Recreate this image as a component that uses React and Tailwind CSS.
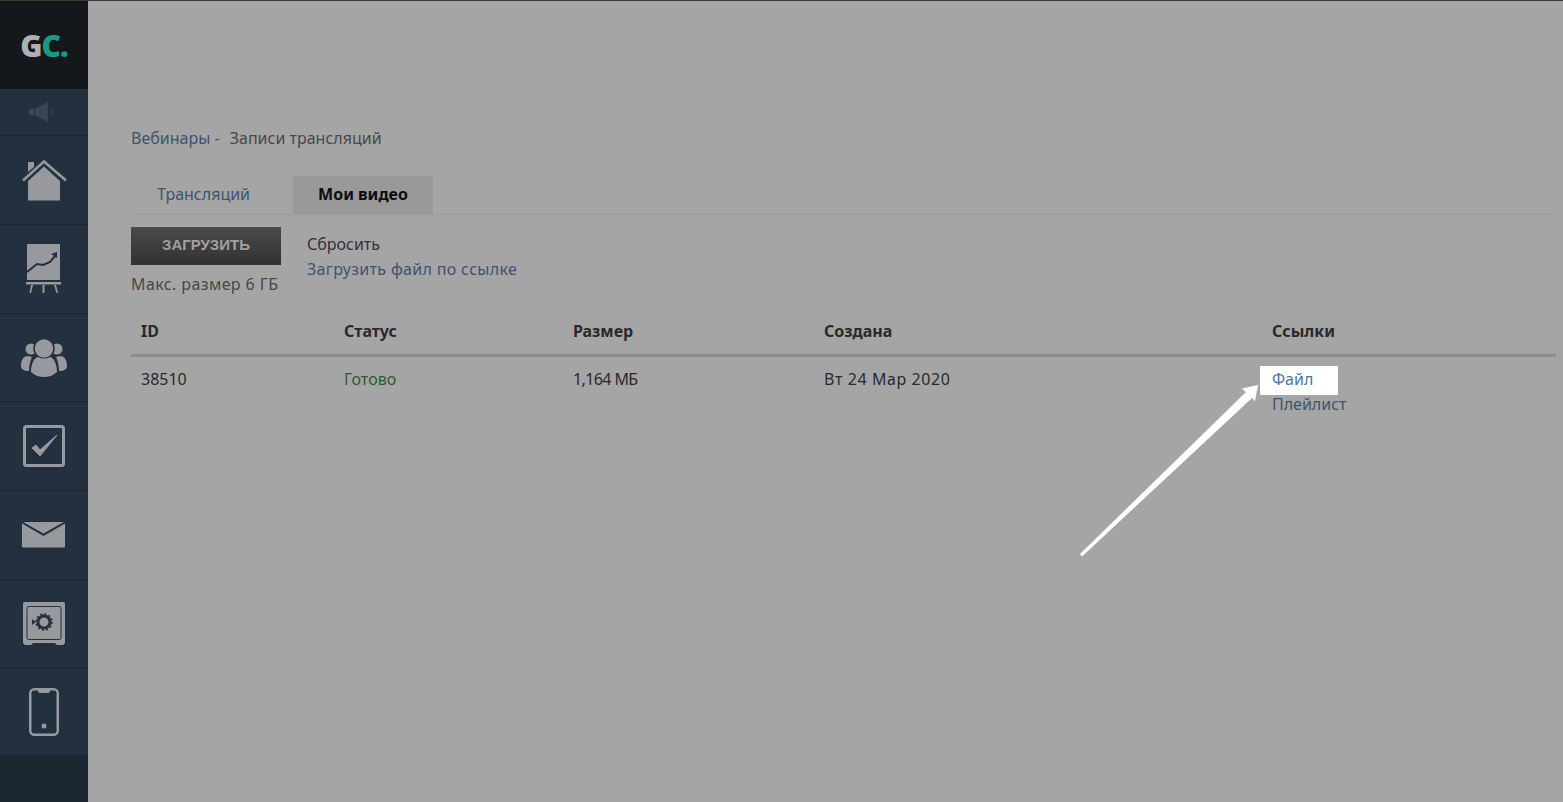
import React from 'react';

const font = { fontFamily: '"Noto Sans", Roboto, sans-serif' };

const IconHome = () => (
  <svg width="46" height="42" viewBox="-1 -1 46 42" fill="#97999c">
    <path d="M6 2h6v5l-6 5z" />
    <path d="M1 20.500 L22 1.500 L44 20.500" fill="none" stroke="#97999c" strokeWidth="2.500" />
    <path d="M6 21 L22 6.500 L38 21 V40.500 H6z" />
  </svg>
);

const IconChart = () => (
  <svg width="36" height="50" viewBox="0 0 36 50" fill="#97999c">
    <rect x="1" width="33" height="36" />
    <rect y="38" width="35" height="2.500" />
    <path d="M5 41h2l-2 8H3.500zM16.500 41h2v8h-2zM28 41h2l2 8h-1.500z" />
    <path d="M1 28 L11 20 L17 21 L24 18 L30 11" fill="none" stroke="#22303f" strokeWidth="2" />
    <path d="M25 10 L31 8 L31 14z" fill="#22303f" />
  </svg>
);

const IconUsers = () => (
  <svg width="46" height="38" viewBox="0 0 46 38" fill="#97999c">
    <circle cx="10" cy="10" r="5.500" />
    <circle cx="36" cy="10" r="5.500" />
    <path d="M0 27c0-7 3-10 7-10l4 1c-2 4-3 9-3 14-4 0-8-1-8-5zM46 27c0-7-3-10-7-10l-4 1c2 4 3 9 3 14 4 0 8-1 8-5z" />
    <circle cx="23" cy="9.500" r="10" stroke="#22303f" strokeWidth="1.500" />
    <path d="M10 33c0-8 3-14 7-15 4 2 8 2 12 0 4 1 7 7 7 15-3 3-8 5-13 5s-10-2-13-5z" />
  </svg>
);

const IconCheck = () => (
  <svg width="42" height="42" viewBox="0 0 42 42" fill="none">
    <rect x="1.500" y="1.500" width="39" height="39" rx="2" stroke="#97999c" strokeWidth="3" />
    <path d="M9 23 L17 31 L34 10 L17 25 L13 20z" fill="#97999c" stroke="#97999c" strokeWidth="1" strokeLinejoin="round" />
  </svg>
);

const IconMail = () => (
  <svg width="44" height="26" viewBox="0 0 44 26" fill="#97999c">
    <path d="M1 0h41L21.500 11.500z" />
    <path d="M0 1.500 L21.500 14 L43 1.500 V24.500 a1 1 0 0 1-1 1 H1 a1 1 0 0 1-1-1z" />
  </svg>
);

const IconSafe = () => (
  <svg width="42" height="44" viewBox="0 0 42 44" fill="none">
    <path d="M2 0h38a2 2 0 0 1 2 2v39l-2 2h-6l-2-2H10l-2 2H2l-2-2V2a2 2 0 0 1 2-2z" fill="#97999c" />
    <rect x="4" y="4.500" width="34" height="33" rx="2" stroke="#22303f" strokeWidth="1" />
    <circle cx="21" cy="20" r="6" stroke="#22303f" strokeWidth="3" />
    <circle cx="21" cy="20" r="8" stroke="#22303f" strokeWidth="1.500" strokeDasharray="2 2.200" />
    <path d="M9 17 L13 20 L9 23z" fill="#22303f" />
  </svg>
);

const IconPhone = () => (
  <svg width="30" height="48" viewBox="0 0 30 48" fill="none">
    <rect x="1.250" y="1.250" width="27.500" height="45.500" rx="4" stroke="#97999c" strokeWidth="2.500" />
    <path d="M9 1h12v2a2 2 0 0 1-2 2h-8a2 2 0 0 1-2-2z" fill="#97999c" />
    <circle cx="15" cy="38" r="2.500" fill="#97999c" />
  </svg>
);

const navItems = [
  { h: 'h-[89px]', icon: <IconHome /> },
  { h: 'h-[89px]', icon: <IconChart /> },
  { h: 'h-[88px]', icon: <IconUsers /> },
  { h: 'h-[89px]', icon: <IconCheck /> },
  { h: 'h-[89px]', icon: <IconMail /> },
  { h: 'h-[88px]', icon: <IconSafe /> },
  { h: 'h-[88px]', icon: <IconPhone /> },
];

const Sidebar = () => (
  <aside className="w-[88px] shrink-0 flex flex-col bg-[#1c2732]">
    <div className="h-[88px] bg-[#14181c] flex items-center justify-center text-[30px] font-extrabold tracking-[-1px]" style={{ fontFamily: '"Open Sans", sans-serif' }}>
      <span className="text-[#b0b0b0]">G</span>
      <span className="text-[#179a87]">C.</span>
    </div>
    <div className="h-[47px] bg-[#22303f] border-b border-[#1a2530] flex items-center justify-center">
      <svg width="30" height="20" viewBox="0 0 30 20" fill="#3a4655">
        <rect x="0" y="7" width="5" height="6" />
        <path d="M6 7 L19 0 V20 L6 13z" />
        <path d="M22 5c2 3 2 7 0 10" fill="none" stroke="#3a4655" />
      </svg>
    </div>
    {navItems.map((item, i) => (
      <div key={i} className={`${item.h} bg-[#22303f] border-b border-[#1a2530] flex items-center justify-center`}>
        {item.icon}
      </div>
    ))}
  </aside>
);

export default function App() {
  return (
    <div className="relative flex h-[802px] overflow-hidden bg-[#a5a5a5] border-t border-[#3a3a3a] text-[16px] text-[#2a2a2a]" style={font}>
      <Sidebar />

      <main className="flex-1 pl-[43px] pr-[7px] pt-[127px]">
        <div className="h-5 leading-5 text-[#484848]">
          <a className="text-[#3c5472]">Вебинары - </a>
          <span className="ml-[6px]">Записи трансляций</span>
        </div>

        <div className="mt-[28px] flex h-[39px] border-b border-[#9b9b9b]">
          <a className="w-[162px] h-[38px] flex items-center pl-[26px] pb-[2px] text-[#3c5472]">Трансляций</a>
          <span className="w-[140px] h-[38px] bg-[#999999] flex items-center justify-center pb-[2px] font-bold text-[#0d0d0d]">Мои видео</span>
        </div>

        <div className="mt-3 flex">
          <div className="w-[176px]">
            <button className="w-[150px] h-[38px] pb-[2px] bg-gradient-to-b from-[#4a4a4a] to-[#323232] text-[#a0a0a0] text-[15px] font-bold font-['Liberation_Sans']">ЗАГРУЗИТЬ</button>
            <div className="mt-[9px] leading-5 text-[#484848] tracking-[0.4px]">Макс. размер 6 ГБ</div>
          </div>
          <div className="pt-[5px] leading-[25px]">
            <div className="text-[#333333]">Сбросить</div>
            <a className="text-[#3c5472] tracking-[0.33px]">Загрузить файл по ссылке</a>
          </div>
        </div>

        <div className="mt-[18px] grid grid-cols-[213px_229px_251px_448px_1fr]">
          {['ID', 'Статус', 'Размер', 'Создана', 'Ссылки'].map((title, i) => (
            <div key={title} className={`h-[45px] border-b-[3px] border-[#8e8e8e] pt-[9px] leading-5 font-bold ${i === 0 ? 'pl-[10px]' : ''}`}>{title}</div>
          ))}
          <div className="pl-[10px] pt-[12px] leading-5">38510</div>
          <div className="pt-[12px] leading-5 text-[#2f5a2f]">Готово</div>
          <div className="pt-[12px] leading-5 tracking-[-0.6px]">1,164 МБ</div>
          <div className="pt-[12px] leading-5 tracking-[0.57px]">Вт 24 Мар 2020</div>
          <div className="pt-[9px]">
            <a className="block w-[78px] h-[29px] -ml-3 pl-3 leading-[27px] bg-white text-[#4a76a8]">Файл</a>
            <a className="block -mt-px leading-5 text-[#3c5472]">Плейлист</a>
          </div>
        </div>
      </main>

      {/* стрелка поверх страницы */}
      <svg className="absolute left-[1075px] top-[379px]" width="190" height="180" viewBox="0 0 190 180" fill="white">
        <path d="M5 174 L171 12 L177 18 L7 176.500z" />
        <path d="M183 5 L167 8.500 L180 21z" />
      </svg>
    </div>
  );
}
